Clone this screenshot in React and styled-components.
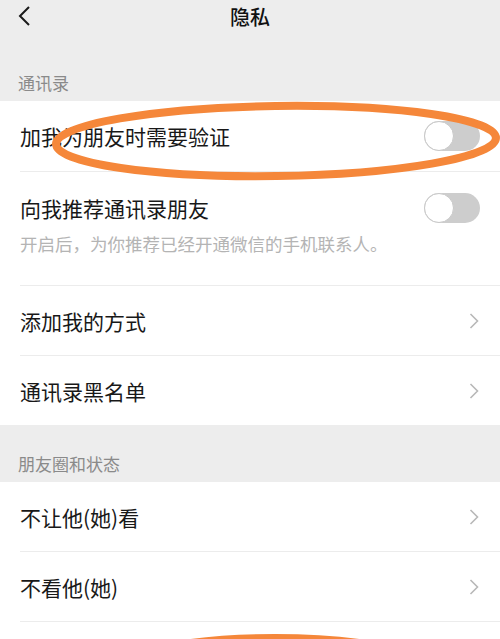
import styled, { createGlobalStyle } from 'styled-components';

const GlobalStyle = createGlobalStyle`
  html, body {
    margin: 0;
    padding: 0;
    background: #ededed;
  }
  body {
    font-family: "Noto Sans CJK SC", "Noto Sans", sans-serif;
  }
`;

const Page = styled.div`
  position: relative;
  width: 500px;
  height: 639px;
  overflow: hidden;
  background: #ededed;
`;

const Header = styled.div`
  position: relative;
  height: 36px;
  display: flex;
  align-items: center;
  justify-content: center;
`;

const BackButton = styled.div`
  position: absolute;
  left: 16px;
  top: 4px;
  width: 18px;
  height: 24px;
`;

const Title = styled.h1`
  margin: 0;
  font-size: 20px;
  font-weight: 500;
  color: #111;
  line-height: 30px;
  margin-top: -2px;
`;

const SectionLabel = styled.div`
  height: ${(p) => p.h}px;
  box-sizing: border-box;
  padding: 0 18px ${(p) => p.pb}px;
  display: flex;
  align-items: flex-end;
  font-size: 17px;
  line-height: 20px;
  color: #8a8a8a;
`;

const Group = styled.div`
  background: #fff;
`;

// one list item, indented separator below it
const Item = styled.div`
  margin-left: 20px;
  border-bottom: ${(p) => (p.last ? 'none' : '1px solid #ececec')};
`;

const Row = styled.div`
  height: ${(p) => p.h || 69}px;
  padding-right: 20px;
  display: flex;
  align-items: center;
  justify-content: space-between;
`;

const TallRow = styled.div`
  padding: 21px 20px 31px 0;
`;

const RowLine = styled.div`
  height: 30px;
  display: flex;
  align-items: center;
  justify-content: space-between;
`;

const Label = styled.span`
  font-size: 21px;
  color: #181818;
  line-height: 30px;
`;

const Hint = styled.div`
  margin-top: 11px;
  font-size: 17.5px;
  line-height: 20px;
  color: #b4b4b4;
`;

const Toggle = styled.div`
  width: 56px;
  height: 30px;
  border-radius: 15px;
  background: #cdcdcd;
  position: relative;
  flex-shrink: 0;
  &::after {
    content: '';
    position: absolute;
    left: 0;
    top: 0;
    width: 28px;
    height: 28px;
    border-radius: 50%;
    background: #fff;
    border: 1px solid #c8c8c8;
  }
`;

const Overlay = styled.svg`
  position: absolute;
  left: 0;
  top: 0;
  pointer-events: none;
`;

const Chevron = () => (
  <svg width="12" height="18" viewBox="0 0 12 18">
    <path d="M2.5 2 L9.5 9 L2.5 16" fill="none" stroke="#b8b8b8" strokeWidth="1.6" />
  </svg>
);

function LinkRow({ label, last }) {
  return (
    <Item last={last}>
      <Row>
        <Label>{label}</Label>
        {label && <Chevron />}
      </Row>
    </Item>
  );
}

export default function App() {
  return (
    <Page>
      <GlobalStyle />
      <Header>
        <BackButton>
          <svg width="18" height="24" viewBox="0 0 18 24">
            <path d="M13 3 L4 12 L13 21" fill="none" stroke="#1a1a1a" strokeWidth="2" />
          </svg>
        </BackButton>
        <Title>隐私</Title>
      </Header>
      <SectionLabel h={65} pb={8}>通讯录</SectionLabel>
      <Group>
        <Item>
          <Row h={70}>
            <Label>加我为朋友时需要验证</Label>
            <Toggle />
          </Row>
        </Item>
        <Item>
          <TallRow>
            <RowLine>
              <Label>向我推荐通讯录朋友</Label>
              <Toggle />
            </RowLine>
            <Hint>开启后，为你推荐已经开通微信的手机联系人。</Hint>
          </TallRow>
        </Item>
        <LinkRow label="添加我的方式" />
        <LinkRow label="通讯录黑名单" last />
      </Group>
      <SectionLabel h={57} pb={8}>朋友圈和状态</SectionLabel>
      <Group>
        <LinkRow label="不让他(她)看" />
        <LinkRow label="不看他(她)" />
        <LinkRow label="" last />
      </Group>
      <Overlay width="500" height="639" viewBox="0 0 500 639">
        <ellipse cx="276" cy="141" rx="220" ry="35" fill="none" stroke="#f5873a" strokeWidth="8" transform="rotate(-0.8 276 141)" />
        <ellipse cx="275" cy="687" rx="190" ry="50" fill="none" stroke="#f5873a" strokeWidth="6" />
      </Overlay>
    </Page>
  );
}
